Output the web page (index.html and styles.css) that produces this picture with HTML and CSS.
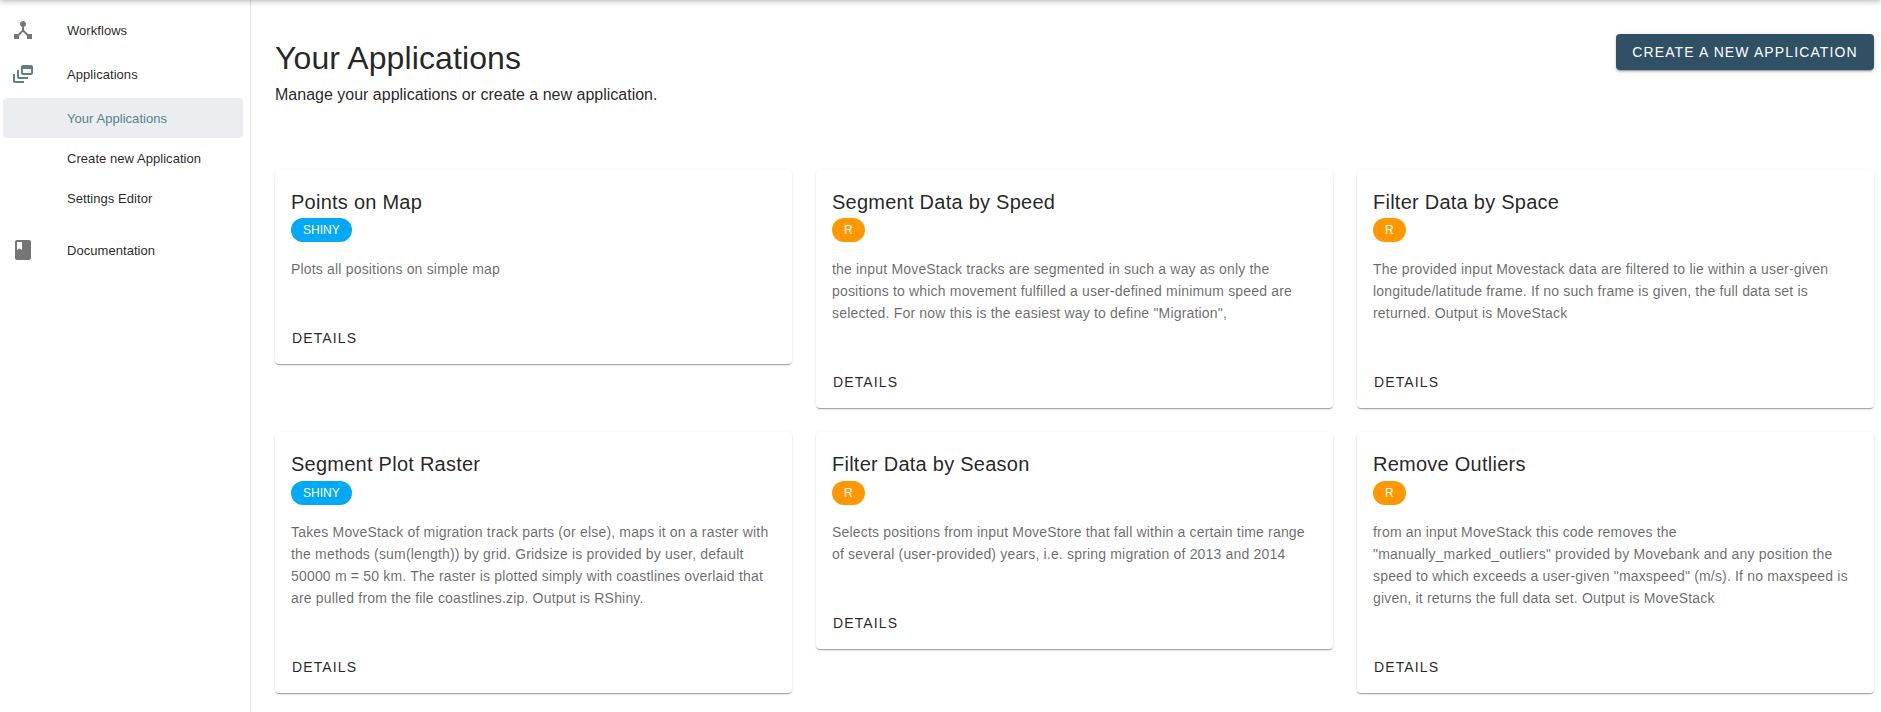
FILE: index.html
```html
<!DOCTYPE html>
<html lang="en">
<head>
<meta charset="utf-8">
<title>Your Applications</title>
<link rel="stylesheet" href="styles.css">
</head>
<body>
<div class="topbar-shadow"></div>
<div class="layout">
  <nav class="sidebar">
    <a class="nav-item"><svg class="nav-icon" viewBox="0 0 24 24"><path d="M17 16l-4-4V8.82C14.16 8.4 15 7.3 15 6c0-1.66-1.34-3-3-3S9 4.34 9 6c0 1.3.84 2.4 2 2.82V12l-4 4H3v5h5v-3.05l4-4.2 4 4.2V21h5v-5h-4z"/></svg><span>Workflows</span></a>
    <a class="nav-item"><svg class="nav-icon nav-icon-active" viewBox="0 0 24 24"><path d="M8 8H6v7c0 1.1.9 2 2 2h9v-2H8V8z"/><path d="M20 3h-8c-1.1 0-2 .9-2 2v6c0 1.1.9 2 2 2h8c1.1 0 2-.9 2-2V5c0-1.1-.9-2-2-2zm0 8h-8V7h8v4z"/><path d="M4 12H2v7c0 1.1.9 2 2 2h9v-2H4v-7z"/></svg><span>Applications</span></a>
    <div class="nav-sub">
      <a class="nav-item nav-selected">Your Applications</a>
      <a class="nav-item">Create new Application</a>
      <a class="nav-item">Settings Editor</a>
    </div>
    <a class="nav-item"><svg class="nav-icon" viewBox="0 0 24 24"><path d="M18 2H6c-1.1 0-2 .9-2 2v16c0 1.1.9 2 2 2h12c1.1 0 2-.9 2-2V4c0-1.1-.9-2-2-2zM6 4h5v8l-2.5-1.5L6 12V4z"/></svg><span>Documentation</span></a>
  </nav>
  <main class="content">
    <header class="page-header">
      <div>
        <h1 class="page-title">Your Applications</h1>
        <p class="page-subtitle">Manage your applications or create a new application.</p>
      </div>
      <button class="button-primary">CREATE A NEW APPLICATION</button>
    </header>
    <section class="cards">
      <article class="card">
        <h2 class="card-title">Points on Map</h2>
        <span class="chip chip-shiny">SHINY</span>
        <p class="card-text">Plots all positions on simple map</p>
        <button class="button-text">DETAILS</button>
      </article>
      <article class="card">
        <h2 class="card-title">Segment Data by Speed</h2>
        <span class="chip chip-r">R</span>
        <p class="card-text">the input MoveStack tracks are segmented in such a way as only the positions to which movement fulfilled a user-defined minimum speed are selected. For now this is the easiest way to define "Migration",</p>
        <button class="button-text">DETAILS</button>
      </article>
      <article class="card">
        <h2 class="card-title">Filter Data by Space</h2>
        <span class="chip chip-r">R</span>
        <p class="card-text">The provided input Movestack data are filtered to lie within a user-given longitude/latitude frame. If no such frame is given, the full data set is returned. Output is MoveStack</p>
        <button class="button-text">DETAILS</button>
      </article>
      <article class="card">
        <h2 class="card-title">Segment Plot Raster</h2>
        <span class="chip chip-shiny">SHINY</span>
        <p class="card-text">Takes MoveStack of migration track parts (or else), maps it on a raster with the methods (sum(length)) by grid. Gridsize is provided by user, default 50000 m = 50 km. The raster is plotted simply with coastlines overlaid that are pulled from the file coastlines.zip. Output is RShiny.</p>
        <button class="button-text">DETAILS</button>
      </article>
      <article class="card">
        <h2 class="card-title">Filter Data by Season</h2>
        <span class="chip chip-r">R</span>
        <p class="card-text">Selects positions from input MoveStore that fall within a certain time range of several (user-provided) years, i.e. spring migration of 2013 and 2014</p>
        <button class="button-text">DETAILS</button>
      </article>
      <article class="card">
        <h2 class="card-title">Remove Outliers</h2>
        <span class="chip chip-r">R</span>
        <p class="card-text">from an input MoveStack this code removes the<br>"manually_marked_outliers" provided by Movebank and any position the speed to which exceeds a user-given "maxspeed" (m/s). If no maxspeed is given, it returns the full data set. Output is MoveStack</p>
        <button class="button-text">DETAILS</button>
      </article>
    </section>
  </main>
</div>
</body>
</html>
```
FILE: styles.css
```css
* { box-sizing: border-box; }

body {
  margin: 0;
  height: 712px;
  overflow: hidden;
  background: #fff;
  color: rgba(0, 0, 0, .87);
  font-family: "Liberation Sans", Arial, sans-serif;
}

h1, h2, p { margin: 0; font-weight: 400; }
button { font-family: inherit; border: 0; }

.topbar-shadow {
  position: absolute;
  top: -66px;
  left: 0;
  right: 0;
  height: 64px;
  box-shadow: 0 2px 4px -1px rgba(0, 0, 0, .2), 0 4px 5px rgba(0, 0, 0, .14), 0 1px 10px rgba(0, 0, 0, .12);
}

.layout { display: flex; height: 712px; }

.sidebar {
  display: flex;
  flex-direction: column;
  flex: none;
  gap: 4px;
  width: 251px;
  padding: 10px 7px 0 3px;
  border-right: 1px solid #e0e0e0;
}

.nav-item {
  display: flex;
  align-items: center;
  height: 40px;
  padding-left: 8px;
  border-radius: 4px;
  font-size: 13px;
  letter-spacing: .05px;
}

.nav-icon { width: 24px; height: 24px; margin-right: 32px; fill: #757575; }
.nav-icon-active { fill: #607d8b; }
.nav-sub { margin-bottom: 8px; }
.nav-sub .nav-item { padding-left: 64px; }
.nav-selected { background: #eaeef0; color: #607d8b; }

.content { flex: 1; padding: 34px 7px 0 24px; }

.page-header {
  display: flex;
  justify-content: space-between;
  align-items: flex-start;
  height: 135.6px;
}

.page-title { padding-top: 3px; font-size: 32px; line-height: 42px; letter-spacing: .1px; }
.page-subtitle { padding-top: 4px; font-size: 16px; line-height: 24px; }

.button-primary {
  width: 258px;
  height: 36px;
  padding: 0;
  border-radius: 4px;
  background: #305066;
  color: #fff;
  font-size: 14px;
  letter-spacing: 1.12px;
  box-shadow: 0 3px 1px -2px rgba(0, 0, 0, .2), 0 2px 2px rgba(0, 0, 0, .14), 0 1px 5px rgba(0, 0, 0, .12);
}

.cards {
  display: grid;
  grid-template-columns: repeat(3, 517px);
  gap: 24px;
  align-items: start;
}

.card {
  display: flex;
  flex-direction: column;
  align-items: flex-start;
  padding: 16px 16px 8px;
  border-radius: 4px;
  background: #fff;
  box-shadow: 0 2px 1px -1px rgba(0, 0, 0, .2), 0 1px 1px rgba(0, 0, 0, .14), 0 1px 3px rgba(0, 0, 0, .12);
}

.card-title { font-size: 20px; line-height: 32.6px; letter-spacing: .25px; }

.chip {
  height: 24px;
  padding: 0 12px;
  border-radius: 12px;
  color: #fff;
  font-size: 12px;
  line-height: 24px;
}

.chip-shiny { background: #03a9f4; }
.chip-r { background: #ff9800; }

.card-text {
  margin-top: 16px;
  color: rgba(0, 0, 0, .6);
  font-size: 14px;
  line-height: 22px;
  letter-spacing: .18px;
}

.button-text {
  height: 36px;
  margin: 40px 0 0 -7px;
  padding: 0 8px;
  background: none;
  color: rgba(0, 0, 0, .87);
  font-size: 14px;
  letter-spacing: 1.12px;
}
```
